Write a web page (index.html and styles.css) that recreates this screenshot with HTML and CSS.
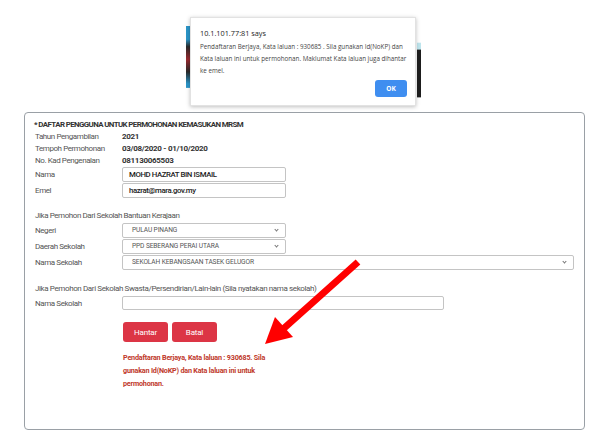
FILE: index.html
```html
<!DOCTYPE html>
<html lang="ms">
<head>
<meta charset="utf-8">
<title>Daftar Pengguna MRSM</title>
<link rel="stylesheet" href="styles.css">
</head>
<body>
<div class="page">
  <section class="card">
    <h1 class="title">* DAFTAR PENGGUNA UNTUK PERMOHONAN KEMASUKAN MRSM</h1>
    <div class="grid info">
      <span class="label">Tahun Pengambilan</span><span class="value">2021</span>
      <span class="label">Tempoh Permohonan</span><span class="value">03/08/2020 - 01/10/2020</span>
      <span class="label">No. Kad Pengenalan</span><span class="value">081130065503</span>
    </div>
    <div class="grid fields">
      <span class="label">Nama</span><div class="input short">MOHD HAZRAT BIN ISMAIL</div>
      <span class="label">Emel</span><div class="input short">hazrat@mara.gov.my</div>
    </div>

    <p class="section">Jika Pemohon Dari Sekolah Bantuan Kerajaan</p>
    <div class="grid fields">
      <span class="label">Negeri</span><div class="select short">PULAU PINANG<span class="chev"></span></div>
      <span class="label">Daerah Sekolah</span><div class="select short">PPD SEBERANG PERAI UTARA<span class="chev"></span></div>
      <span class="label">Nama Sekolah</span><div class="select wide">SEKOLAH KEBANGSAAN TASEK GELUGOR<span class="chev"></span></div>
    </div>

    <p class="section second">Jika Pemohon Dari Sekolah Swasta/Persendirian/Lain-lain (Sila nyatakan nama sekolah)</p>
    <div class="grid fields">
      <span class="label">Nama Sekolah</span><div class="input medium"></div>
    </div>

    <div class="actions">
      <button class="btn">Hantar</button>
      <button class="btn">Batal</button>
    </div>
    <p class="msg">Pendaftaran Berjaya, Kata laluan : 930685. Sila gunakan Id(NoKP) dan Kata laluan ini untuk permohonan.</p>
  </section>
</div>

<div class="behind"></div>
<div class="dialog">
  <div class="dlg-title">10.1.101.77:81 says</div>
  <p class="dlg-body">Pendaftaran Berjaya, Kata laluan : 930685 . Sila gunakan Id(NoKP) dan Kata laluan ini untuk permohonan. Maklumat Kata laluan juga dihantar ke emel.</p>
  <div class="dlg-actions"><button class="ok">OK</button></div>
</div>

<svg class="arrow" width="610" height="432" viewBox="0 0 610 432">
  <line x1="358" y1="262" x2="282" y2="330" stroke="#ff0000" stroke-width="7"/>
  <polygon points="265,344 275,317 293,337" fill="#ff0000"/>
</svg>
</body>
</html>
```

FILE: styles.css
```css
html, body {
  margin: 0;
  padding: 0;
  background: #ffffff;
}
body {
  width: 610px;
  height: 432px;
  overflow: hidden;
  position: relative;
  font-family: Roboto, "Liberation Sans", sans-serif;
  color: #555;
}
.page {
  padding: 112px 25px 0 24px;
}
.card {
  border: 1px solid #9aa0a6;
  border-radius: 4px;
  height: 318px;
  box-sizing: border-box;
  padding: 6px 11px 0 9px;
}
.title {
  margin: 0;
  font-size: 7.9px;
  line-height: 12px;
  font-weight: 700;
  color: #333;
  letter-spacing: -0.6px;
}
.grid {
  display: grid;
  grid-template-columns: 87px 1fr;
  align-items: center;
  font-size: 8px;
  letter-spacing: -0.42px;
}
.info {
  line-height: 12px;
  padding-left: 1px;
}
.fields {
  row-gap: 1px;
  padding-left: 1px;
}
.label {
  color: #555;
}
.value {
  color: #333;
  font-weight: 700;
  letter-spacing: -0.3px;
}
.input, .select {
  height: 15px;
  box-sizing: border-box;
  border: 1px solid #c4c4c4;
  border-radius: 2px;
  padding: 0 6px;
  line-height: 13px;
  background: #fff;
}
.input {
  color: #222;
  font-weight: 500;
  font-size: 7.8px;
  letter-spacing: -0.4px;
}
.select {
  position: relative;
  font-size: 6.6px;
  letter-spacing: -0.1px;
  color: #555;
  padding-left: 9px;
}
.short { width: 164px; }
.medium { width: 322px; height: 14px; }
.wide { width: 452px; }
.chev {
  position: absolute;
  right: 7px;
  top: 4px;
  width: 2px;
  height: 2px;
  border-right: 1px solid #777;
  border-bottom: 1px solid #777;
  transform: rotate(45deg);
}
.section {
  margin: 12px 0 1px 1px;
  line-height: 12px;
  font-size: 8px;
  letter-spacing: -0.42px;
  color: #555;
}
.section.second {
  margin-top: 13px;
  letter-spacing: -0.38px;
}
.actions {
  display: flex;
  gap: 4px;
  margin: 12px 0 0 89px;
}
.btn {
  height: 20px;
  width: 45px;
  border: none;
  border-radius: 3px;
  background: #dc3545;
  color: #fff;
  font-family: Roboto, "Liberation Sans", sans-serif;
  font-size: 8px;
  letter-spacing: -0.2px;
  padding: 0;
}
.msg {
  margin: 9px 0 0 89px;
  width: 150px;
  font-size: 7.2px;
  line-height: 13px;
  font-weight: 700;
  color: #c0392b;
  letter-spacing: -0.2px;
}

.behind {
  position: absolute;
  left: 186px;
  top: 26px;
  width: 235px;
  height: 74px;
  background:
    linear-gradient(to bottom, #2b95c8 0, #2b95c8 18%, #2a2a2a 28%, #9b2a30 45%, #2a2a2a 62%, #2b95c8 78%, #2b95c8 83%, transparent 84%) left / 4px 100% no-repeat,
    linear-gradient(to bottom, transparent 0, transparent 22%, #bfe6ee 23%, #bfe6ee 31%, #1e1e1e 33%, #1e1e1e 96%, transparent 97%) right / 4px 100% no-repeat;
}
.dialog {
  position: absolute;
  left: 190px;
  top: 17px;
  width: 226px;
  height: 89px;
  box-sizing: border-box;
  background: #fff;
  border: 1px solid #e2e2e2;
  box-shadow: 0 1px 4px rgba(0,0,0,0.25);
  padding: 9px 4px 0 9px;
  font-family: "Open Sans", "Noto Sans", sans-serif;
}
.dlg-title {
  font-size: 7.3px;
  line-height: 12px;
  color: #222;
}
.dlg-body {
  margin: 2px 0 0 0;
  font-size: 6.25px;
  line-height: 12px;
  color: #444;
}
.dlg-actions {
  position: absolute;
  right: 8px;
  bottom: 8px;
}
.ok {
  width: 32px;
  height: 17px;
  border: none;
  border-radius: 3px;
  background: #3f8ef0;
  color: #fff;
  font-family: "Open Sans", "Noto Sans", sans-serif;
  font-size: 6.5px;
  font-weight: 700;
  padding: 0;
}
.arrow {
  position: absolute;
  left: 0;
  top: 0;
  pointer-events: none;
}
```
